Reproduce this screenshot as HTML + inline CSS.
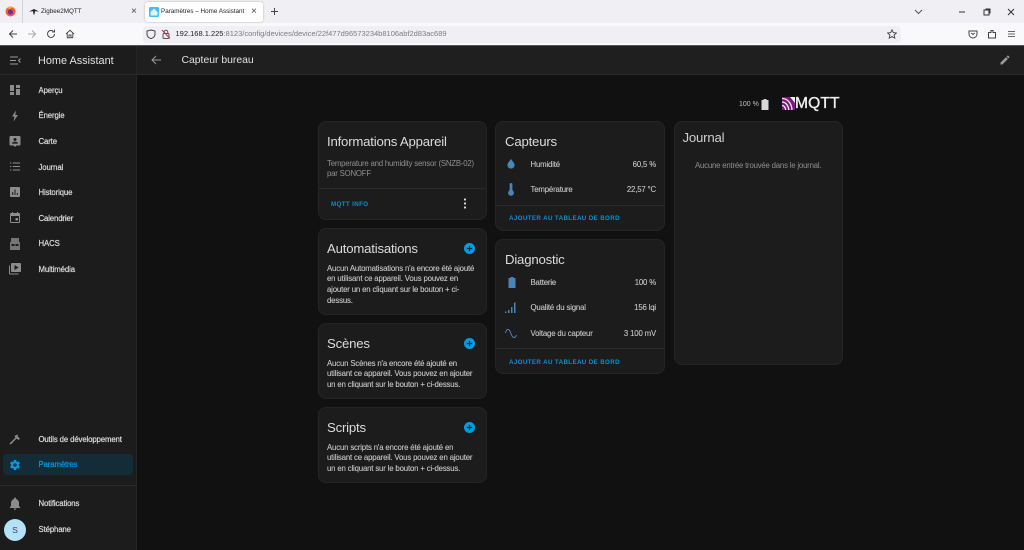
<!DOCTYPE html>
<html lang="fr"><head><meta charset="utf-8"><title>Paramètres – Home Assistant</title>
<style>
html,body{margin:0;padding:0;width:1024px;height:550px;overflow:hidden;background:#111;font-family:"Liberation Sans",sans-serif}
body{filter:blur(.3px)}
div,span,svg{position:absolute}
.t{white-space:nowrap;line-height:14px}
.nav{left:38.5px;margin-top:.6px;font-size:7.8px;color:#dcdcdc;letter-spacing:-.13px;-webkit-text-stroke:.2px #dcdcdc}
.card{background:#1c1c1c;border:1px solid #252525;border-radius:8px;box-sizing:border-box}
.h{font-size:13.2px;letter-spacing:-.2px;color:#dcdcdc}
.b{font-size:7.8px;margin-top:.6px;letter-spacing:-.16px;color:#c8c8c8;line-height:10.7px;white-space:nowrap;-webkit-text-stroke:.1px #c8c8c8}
.lnk{font-size:6.2px;margin-top:1px;font-weight:bold;color:#0a8fd0;letter-spacing:.38px}
.ico{fill:#8c8c8c}
.e{fill:#4b84b8}
.sep{height:1px;background:#2a2a2a}
.tab{font-size:6.3px;color:#222}
</style></head><body>
<!-- browser chrome -->
<div style="left:0;top:0;width:1024px;height:23px;background:#f0f0f4"></div>
<div style="left:0;top:23px;width:1024px;height:22px;background:#f9f9fb"></div>
<div style="left:0;top:45px;width:1024px;height:1px;background:#555"></div>
<svg style="left:5px;top:6px" width="11" height="11" viewBox="0 0 11 11"><circle cx="5.5" cy="5.5" r="5" fill="#f2622e"/><circle cx="5.5" cy="6" r="2.6" fill="#6a2fb0"/><path d="M2 2 Q5 0 8 1 L5 3z" fill="#ffb03a"/></svg>
<div style="left:22px;top:0;width:1px;height:23px;background:#d4d4d8"></div>
<svg style="left:29px;top:8px" width="10" height="7" viewBox="0 0 10 7"><path d="M0 3.5 L5 1 L10 3.5 L6 3.2 L5.5 6.5 L4.5 6.5 L4 3.2z" fill="#222"/></svg>
<div class="t tab" style="left:41px;top:5px">Zigbee2MQTT</div>
<div class="t" style="left:131px;top:5px;font-size:10px;color:#444">×</div>
<div style="left:145px;top:2px;width:118px;height:20px;background:#fff;border-radius:3px;box-shadow:0 0 2px rgba(0,0,0,.25)"></div>
<svg style="left:149px;top:7px" width="10" height="10" viewBox="0 0 10 10"><rect width="10" height="10" rx="1.5" fill="#41bdf5"/><path d="M5 1.5 L8.5 5 V8.5 H1.5 V5z" fill="#fff" opacity=".85"/></svg>
<div class="t tab" style="left:161px;top:5px">Paramètres – Home Assistant</div>
<div class="t" style="left:251px;top:5px;font-size:10px;color:#444">×</div>
<svg style="left:270px;top:7px" width="9" height="9" viewBox="0 0 9 9"><path d="M4.5 1V8M1 4.5H8" stroke="#444" stroke-width="1"/></svg>
<svg style="left:914px;top:9px" width="9" height="6" viewBox="0 0 9 6"><path d="M1 1L4.5 4.5L8 1" stroke="#555" fill="none"/></svg>
<svg style="left:958px;top:8px" width="8" height="8" viewBox="0 0 8 8"><path d="M1 4H7" stroke="#333"/></svg>
<svg style="left:983px;top:8px" width="8" height="8" viewBox="0 0 8 8"><rect x="1" y="2" width="5" height="5" fill="none" stroke="#333"/><path d="M2.5 1H7V5.5" fill="none" stroke="#333"/></svg>
<svg style="left:1007px;top:8px" width="8" height="8" viewBox="0 0 8 8"><path d="M1 1L7 7M7 1L1 7" stroke="#333"/></svg>
<svg style="left:8px;top:29px" width="10" height="10" viewBox="0 0 10 10"><path d="M9 5H1.5M5 1.5L1.5 5L5 8.5" stroke="#444" fill="none"/></svg>
<svg style="left:27px;top:29px" width="10" height="10" viewBox="0 0 10 10"><path d="M1 5H8.5M5 1.5L8.5 5L5 8.5" stroke="#aaa" fill="none"/></svg>
<svg style="left:46px;top:29px" width="10" height="10" viewBox="0 0 10 10"><path d="M8.5 5A3.5 3.5 0 1 1 7.4 2.4M8.5 .8V3H6.3" stroke="#444" fill="none"/></svg>
<svg style="left:65px;top:29px" width="10" height="10" viewBox="0 0 10 10"><path d="M1 5L5 1.3L9 5M2.2 4.2V8.8H7.8V4.2M4 8.8V6H6V8.8" stroke="#444" fill="none" stroke-width=".9"/></svg>
<div style="left:143px;top:26px;width:758px;height:17px;background:#f0f0f4;border-radius:3px"></div>
<svg style="left:146px;top:29px" width="10" height="10" viewBox="0 0 10 10"><path d="M5 1L9 2V5C9 7.5 7 9 5 9.6C3 9 1 7.5 1 5V2z" stroke="#444" fill="none"/></svg>
<svg style="left:161px;top:29px" width="10" height="10" viewBox="0 0 10 10"><rect x="2" y="4.5" width="6" height="5" rx="1" fill="none" stroke="#555"/><path d="M3.2 4.5V3A1.8 1.8 0 0 1 6.8 3V4.5" fill="none" stroke="#555"/><path d="M1 1L9 9.5" stroke="#d7264d"/></svg>
<div class="t" style="left:175.5px;top:27px;font-size:7.5px;color:#222">192.168.1.225<span style="position:static;color:#7c7c80">:8123/config/devices/device/22f477d96573234b8106abf2d83ac689</span></div>
<svg style="left:887px;top:29px" width="10" height="10" viewBox="0 0 10 10"><path d="M5 .8L6.3 3.6L9.4 4L7.1 6L7.8 9.1L5 7.5L2.2 9.1L2.9 6L.6 4L3.7 3.6z" fill="none" stroke="#444" stroke-width=".9"/></svg>
<svg style="left:968px;top:29px" width="10" height="10" viewBox="0 0 10 10"><path d="M1 2H9V5A4 4 0 0 1 1 5z" fill="none" stroke="#444"/><path d="M3.3 4L5 5.5L6.7 4" fill="none" stroke="#444"/></svg>
<svg style="left:987px;top:29px" width="10" height="10" viewBox="0 0 10 10"><path d="M1.5 3.5H4V1.5H6V3.5H8.5V9H1.5z" fill="none" stroke="#444"/></svg>
<svg style="left:1007px;top:29px" width="9" height="10" viewBox="0 0 9 10"><path d="M1 2.5H8M1 5H8M1 7.5H8" stroke="#666"/></svg>

<!-- sidebar -->
<div style="left:0;top:46px;width:137px;height:504px;background:#1c1c1c"></div>
<div style="left:137px;top:46px;width:887px;height:29px;background:#1f1f1f"></div>
<div style="left:0;top:74px;width:1024px;height:1px;background:#292929"></div>
<div style="left:136px;top:46px;width:1px;height:504px;background:#262626"></div>
<svg style="left:10px;top:56px" width="11" height="9" viewBox="0 0 11 9"><path d="M0 1H8M0 4.5H6M0 8H8M10.5 2.5L8.5 4.5L10.5 6.5" stroke="#9a9a9a" fill="none"/></svg>
<div class="t" style="left:38px;top:53.5px;font-size:10.9px;color:#e1e1e1">Home Assistant</div>
<svg style="left:151px;top:55px" width="10" height="10" viewBox="0 0 10 10"><path d="M10 5H1M5 1L1 5L5 9" stroke="#999" fill="none"/></svg>
<div class="t" style="left:181.5px;top:53.5px;font-size:10.4px;color:#e1e1e1">Capteur bureau</div>
<svg style="left:999px;top:54px" width="12" height="12" viewBox="0 0 24 24"><path fill="#9a9a9a" d="M3 17.25V21h3.75L17.8 9.94l-3.75-3.75zM20.7 7.04a1 1 0 0 0 0-1.41l-2.34-2.34a1 1 0 0 0-1.41 0l-1.83 1.83 3.75 3.75z"/></svg>

<svg class="ico" style="left:9px;top:84px" width="12" height="12" viewBox="0 0 12 12"><path d="M1 1H5V7H1zM7 1H11V4H7zM1 8H5V11H1zM7 5H11V11H7z"/></svg>
<div class="t nav" style="top:83px">Aperçu</div>
<svg class="ico" style="left:10px;top:110px" width="10" height="12" viewBox="0 0 10 12"><path d="M6 .5L2 6.5H4.5L3.5 11.5L8 5H5.3z"/></svg>
<div class="t nav" style="top:108.5px">Énergie</div>
<svg class="ico" style="left:9px;top:135px" width="12" height="13" viewBox="0 0 12 13"><path fill-rule="evenodd" d="M1.5 1H10.5A1 1 0 0 1 11.5 2V9.5A1 1 0 0 1 10.5 10.5H7.5L6 12L4.5 10.5H1.5A1 1 0 0 1 .5 9.5V2A1 1 0 0 1 1.5 1ZM6 3A1.5 1.5 0 1 0 6 6A1.5 1.5 0 0 0 6 3ZM3 8.6H9C9 7.3 7.5 6.8 6 6.8S3 7.3 3 8.6Z"/></svg>
<div class="t nav" style="top:134px">Carte</div>
<svg style="left:10px;top:162px" width="10" height="9" viewBox="0 0 10 9"><path d="M0 1H1.3M2.8 1H10M0 4.5H1.3M2.8 4.5H10M0 8H1.3M2.8 8H10" stroke="#8c8c8c" stroke-width="1.1"/></svg>
<div class="t nav" style="top:160px">Journal</div>
<svg class="ico" style="left:10px;top:187px" width="10" height="10" viewBox="0 0 10 10"><path fill-rule="evenodd" d="M1 0H9A1 1 0 0 1 10 1V9A1 1 0 0 1 9 10H1A1 1 0 0 1 0 9V1A1 1 0 0 1 1 0ZM2.2 5V8H3.2V5ZM4.5 2.5V8H5.5V2.5ZM6.8 6V8H7.8V6Z"/></svg>
<div class="t nav" style="top:185px">Historique</div>
<svg class="ico" style="left:10px;top:212px" width="10" height="11" viewBox="0 0 10 11"><path fill-rule="evenodd" d="M2 0H3V1H7V0H8V1H9A1 1 0 0 1 10 2V10A1 1 0 0 1 9 11H1A1 1 0 0 1 0 10V2A1 1 0 0 1 1 1H2ZM1 4V10H9V4ZM5.5 6H8V8.5H5.5Z"/></svg>
<div class="t nav" style="top:211px">Calendrier</div>
<svg class="ico" style="left:10px;top:238px" width="10" height="12" viewBox="0 0 10 12"><path fill-rule="evenodd" d="M1 0H9V3.5L10 4.5V12H0V4.5L1 3.5ZM1.5 6V8H4.5V6ZM5.5 6V8H8.5V6Z" opacity=".8"/></svg>
<div class="t nav" style="top:236.5px">HACS</div>
<svg class="ico" style="left:9px;top:263px" width="12" height="12" viewBox="0 0 12 12"><path fill-rule="evenodd" d="M3 0H11A1 1 0 0 1 12 1V8A1 1 0 0 1 11 9H3A1 1 0 0 1 2 8V1A1 1 0 0 1 3 0ZM5.5 2V7L9.5 4.5ZM0 2.5H1V10.5H9.5V11.5H1A1 1 0 0 1 0 10.5Z"/></svg>
<div class="t nav" style="top:262px">Multimédia</div>

<svg class="ico" style="left:9px;top:433px" width="12" height="12" viewBox="0 0 12 12"><path d="M.5 10.5L6.5 4.5L5.5 3.3Q7 1.5 9.5 1.8L8.3 3L11 5.8L9.5 7L7.5 5.5L1.8 11.5Z"/></svg>
<div class="t nav" style="top:432px">Outils de développement</div>
<div style="left:3px;top:454px;width:130px;height:21px;background:#142c38;border-radius:4px"></div>
<svg style="left:9px;top:459px" width="12" height="12" viewBox="0 0 24 24"><path fill="#039be5" d="M12 15.5A3.5 3.5 0 1 1 12 8.5a3.5 3.5 0 0 1 0 7zm7.43-2.53c.04-.32.07-.64.07-.97s-.03-.66-.07-1l2.11-1.63a.5.5 0 0 0 .12-.64l-2-3.46a.5.5 0 0 0-.61-.22l-2.49 1a7.3 7.3 0 0 0-1.69-.98l-.37-2.65A.5.5 0 0 0 14 2h-4a.5.5 0 0 0-.5.42l-.37 2.65c-.63.25-1.17.59-1.69.98l-2.49-1a.5.5 0 0 0-.61.22l-2 3.46a.5.5 0 0 0 .12.64L4.57 11c-.04.34-.07.67-.07 1s.03.65.07.97l-2.11 1.66a.5.5 0 0 0-.12.64l2 3.46c.12.22.39.3.61.22l2.49-1.01c.52.4 1.06.74 1.69.99l.37 2.65c.04.24.25.42.5.42h4c.25 0 .46-.18.5-.42l.37-2.65c.63-.26 1.17-.59 1.69-.99l2.49 1.01c.22.08.49 0 .61-.22l2-3.46a.5.5 0 0 0-.12-.64z"/></svg>
<div class="t nav" style="top:457.5px;color:#039be5;-webkit-text-stroke-color:#039be5">Paramètres</div>
<div style="left:0;top:485px;width:136px;height:1px;background:#2a2a2a"></div>
<svg class="ico" style="left:9px;top:497px" width="12" height="13" viewBox="0 0 12 13"><path d="M6 0.5A1 1 0 0 1 7 1.5V2C8.8 2.5 10 4 10 6V9L11.2 10.2V11H.8V10.2L2 9V6C2 4 3.2 2.5 5 2V1.5A1 1 0 0 1 6 .5ZM4.7 11.5H7.3A1.3 1.3 0 0 1 4.7 11.5Z"/></svg>
<div class="t nav" style="top:496.5px">Notifications</div>
<div style="left:4px;top:519px;width:22px;height:22px;border-radius:50%;background:#b5e2fa"></div>
<div class="t" style="left:4px;top:523px;width:22px;text-align:center;font-size:8.6px;color:#444">S</div>
<div class="t nav" style="top:522px">Stéphane</div>

<!-- top right -->
<div class="t" style="left:739px;top:97.5px;font-size:7px;color:#c0c0c0">100 %</div>
<svg style="left:761px;top:99px" width="8" height="11" viewBox="0 0 8 11"><path d="M2.5 0H5.5V1H7.5V11H.5V1H2.5Z" fill="#d8d8d8"/></svg>
<svg style="left:781.5px;top:97px" width="13" height="13" viewBox="0 0 13 13"><rect width="13" height="13" fill="#7d1a7d"/><path d="M0 1.5C5 1.5 9.5 5.5 10 13M0 5C3.5 5 6.5 8.5 6.8 13M0 8.5C2 8.5 3.5 10.5 3.7 13" stroke="#f2f2f2" stroke-width="1.3" fill="none"/><path d="M8 0H13V6Z" fill="#f2f2f2"/></svg>
<div class="t" style="left:795px;top:97px;font-size:15.6px;line-height:14px;color:#f0f0f0;-webkit-text-stroke:.35px #f0f0f0;letter-spacing:.1px">MQTT</div>

<!-- col 1 -->
<div class="card" style="left:318px;top:121px;width:169px;height:99px"></div>
<div class="t h" style="left:327px;top:135px">Informations Appareil</div>
<div class="b" style="left:327px;top:158px;color:#8f8f8f;-webkit-text-stroke:0;letter-spacing:-.2px">Temperature and humidity sensor (SNZB-02)<br>par SONOFF</div>
<div class="sep" style="left:319px;top:187.5px;width:167px"></div>
<div class="t lnk" style="left:331px;top:197px">MQTT INFO</div>
<svg style="left:463px;top:198px" width="4" height="11" viewBox="0 0 4 11"><circle cx="2" cy="1.5" r="1.1" fill="#ddd"/><circle cx="2" cy="5.5" r="1.1" fill="#ddd"/><circle cx="2" cy="9.5" r="1.1" fill="#ddd"/></svg>

<div class="card" style="left:318px;top:228px;width:169px;height:87px"></div>
<div class="t h" style="left:327px;top:241.5px">Automatisations</div>
<svg style="left:464px;top:242.5px" width="11" height="11" viewBox="0 0 11 11"><circle cx="5.5" cy="5.5" r="5.5" fill="#039be5"/><path d="M5.5 2.8V8.2M2.8 5.5H8.2" stroke="#1c1c1c" stroke-width="1.2"/></svg>
<div class="b" style="left:327px;top:263px">Aucun Automatisations n'a encore été ajouté<br>en utilisant ce appareil. Vous pouvez en<br>ajouter un en cliquant sur le bouton + ci-<br>dessus.</div>

<div class="card" style="left:318px;top:323px;width:169px;height:76px"></div>
<div class="t h" style="left:327px;top:336.5px">Scènes</div>
<svg style="left:464px;top:337.5px" width="11" height="11" viewBox="0 0 11 11"><circle cx="5.5" cy="5.5" r="5.5" fill="#039be5"/><path d="M5.5 2.8V8.2M2.8 5.5H8.2" stroke="#1c1c1c" stroke-width="1.2"/></svg>
<div class="b" style="left:327px;top:358px">Aucun Scènes n'a encore été ajouté en<br>utilisant ce appareil. Vous pouvez en ajouter<br>un en cliquant sur le bouton + ci-dessus.</div>

<div class="card" style="left:318px;top:407px;width:169px;height:76px"></div>
<div class="t h" style="left:327px;top:420.5px">Scripts</div>
<svg style="left:464px;top:421.5px" width="11" height="11" viewBox="0 0 11 11"><circle cx="5.5" cy="5.5" r="5.5" fill="#039be5"/><path d="M5.5 2.8V8.2M2.8 5.5H8.2" stroke="#1c1c1c" stroke-width="1.2"/></svg>
<div class="b" style="left:327px;top:442px">Aucun scripts n'a encore été ajouté en<br>utilisant ce appareil. Vous pouvez en ajouter<br>un en cliquant sur le bouton + ci-dessus.</div>

<!-- col 2 -->
<div class="card" style="left:495px;top:121px;width:170px;height:110px"></div>
<div class="t h" style="left:505px;top:135px">Capteurs</div>
<svg class="e" style="left:507px;top:159px" width="8" height="10" viewBox="0 0 8 10"><path d="M4 0L7 4A3.6 3.6 0 1 1 1 4Z"/></svg>
<div class="t b" style="left:530.5px;top:157px;line-height:14px">Humidité</div>
<div class="t b" style="right:368px;top:157px;line-height:14px">60,5 %</div>
<svg class="e" style="left:508px;top:183px" width="6" height="13" viewBox="0 0 6 13"><path d="M3 0A1.4 1.4 0 0 1 4.4 1.4V7.3A2.9 2.9 0 1 1 1.6 7.3V1.4A1.4 1.4 0 0 1 3 0Z"/></svg>
<div class="t b" style="left:530.5px;top:182.5px;line-height:14px">Température</div>
<div class="t b" style="right:368px;top:182.5px;line-height:14px">22,57 °C</div>
<div class="sep" style="left:496px;top:204.5px;width:168px"></div>
<div class="t lnk" style="left:509px;top:211px">AJOUTER AU TABLEAU DE BORD</div>

<div class="card" style="left:495px;top:239px;width:170px;height:135px"></div>
<div class="t h" style="left:505px;top:252.5px">Diagnostic</div>
<svg style="left:507.5px;top:277px" width="8" height="11" viewBox="0 0 8 11"><path d="M2.5 0H5.5V1H7.5V11H.5V1H2.5Z" fill="#4b84b8"/></svg>
<div class="t b" style="left:530.5px;top:275px;line-height:14px">Batterie</div>
<div class="t b" style="right:368px;top:275px;line-height:14px">100 %</div>
<svg style="left:505px;top:302px" width="11" height="11" viewBox="0 0 11 11"><path d="M0 9.5H1.5V11H0ZM3 8H4.5V11H3ZM6 5H7.5V11H6ZM9 .5H10.5V11H9Z" fill="#4b84b8"/></svg>
<div class="t b" style="left:530.5px;top:300.5px;line-height:14px">Qualité du signal</div>
<div class="t b" style="right:368px;top:300.5px;line-height:14px">156 lqi</div>
<svg style="left:505px;top:328px" width="12" height="11" viewBox="0 0 12 11"><path d="M.5 5C1.5 .5 4 0 5.5 4.5S9.5 12 11.5 7" stroke="#4b84b8" fill="none"/></svg>
<div class="t b" style="left:530.5px;top:326px;line-height:14px">Voltage du capteur</div>
<div class="t b" style="right:368px;top:326px;line-height:14px">3 100 mV</div>
<div class="sep" style="left:496px;top:348px;width:168px"></div>
<div class="t lnk" style="left:509px;top:355px">AJOUTER AU TABLEAU DE BORD</div>

<!-- col 3 -->
<div class="card" style="left:674px;top:121px;width:169px;height:244px"></div>
<div class="t h" style="left:682.5px;top:131px;color:#d0d0d0">Journal</div>
<div class="t b" style="left:695px;top:158px;line-height:14px;color:#8f8f8f;-webkit-text-stroke:0;letter-spacing:-.2px">Aucune entrée trouvée dans le journal.</div>
</body></html>
